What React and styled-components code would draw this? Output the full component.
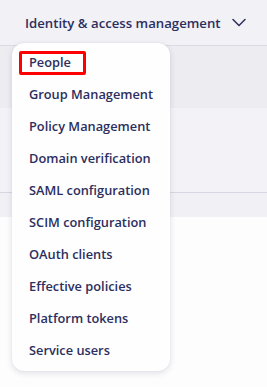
import React from "react";
import styled, { createGlobalStyle } from "styled-components";

const Global = createGlobalStyle`
  html, body { margin: 0; padding: 0; background: #fdfdfe; }
  body { font-family: "Open Sans", "Noto Sans", sans-serif; }
  * { box-sizing: border-box; }
`;

const Page = styled.div`
  position: relative;
  width: 267px;
  height: 387px;
  overflow: hidden;
  display: flex;
  flex-direction: column;
`;

const Header = styled.div`
  height: 46px;
  flex: none;
  background: #f2f1f6;
  border-bottom: 1px solid #dcdbe3;
  display: flex;
  align-items: center;
  padding-left: 25px;
  gap: 11px;
`;

const Title = styled.span`
  font-size: 13.2px;
  font-weight: 600;
  color: #2c2f5d;
`;

const Band = styled.div`
  flex: none;
  height: ${(p) => p.$h}px;
  background: ${(p) => p.$bg};
  border-bottom: ${(p) => (p.$line ? "1px solid #d8d7e1" : "none")};
`;

const Rest = styled.div`
  flex: 1;
  background: #fdfdfe;
`;

const Menu = styled.ul`
  position: absolute;
  left: 12px;
  top: 43px;
  width: 158px;
  margin: 0;
  padding: 3px 0 5px;
  list-style: none;
  background: #fefeff;
  border-radius: 12px;
  box-shadow: 0 2px 6px rgba(40, 40, 80, 0.14), 0 0 1px rgba(40, 40, 80, 0.12);
`;

const Item = styled.li`
  height: 32px;
  display: flex;
  align-items: center;
  padding-left: 17px;
  font-size: 12.8px;
  font-weight: 600;
  color: #2c2f5d;
  white-space: nowrap;
`;

const Highlight = styled.span`
  position: absolute;
  left: 7px;
  top: 8px;
  width: 67px;
  height: 24px;
  border: 3px solid #ff0000;
  border-radius: 2px;
`;

const Chevron = () => (
  <svg width="14" height="14" viewBox="0 0 14 14" fill="none">
    <path d="M1 3.5 L7 9.5 L13 3.5" stroke="#2c2f5d" strokeWidth="1.5" strokeLinecap="round" strokeLinejoin="round" />
  </svg>
);

const items = [
  "People",
  "Group Management",
  "Policy Management",
  "Domain verification",
  "SAML configuration",
  "SCIM configuration",
  "OAuth clients",
  "Effective policies",
  "Platform tokens",
  "Service users",
];

export default function App() {
  return (
    <Page>
      <Global />
      <Header>
        <Title>Identity &amp; access management</Title>
        <Chevron />
      </Header>
      <Band $h={62} $bg="#ececf1" />
      <Band $h={85} $bg="#f3f3f7" $line />
      <Band $h={24} $bg="#f1f1f5" />
      <Rest />
      <Menu>
        <Highlight />
        {items.map((t) => (
          <Item key={t}>{t}</Item>
        ))}
      </Menu>
    </Page>
  );
}
